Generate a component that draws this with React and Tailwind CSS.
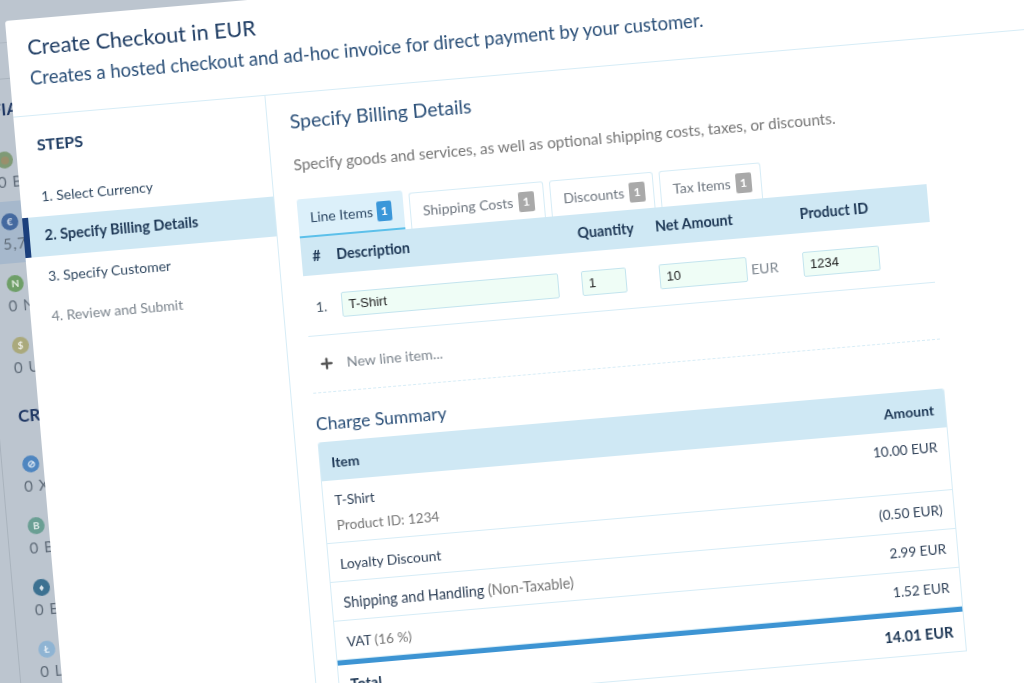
import { Plus } from "lucide-react";

const fiat = [
  { glyph: <span className="size-[8px] rounded-full bg-[#9a8f6c]" />, label: "0 BRL", coin: "bg-[#7f9a76]" },
  { glyph: "€", label: "5,700 EUR", coin: "bg-[#44699f]", active: true },
  { glyph: "N", label: "0 NGN", coin: "bg-[#6f9f68]" },
  { glyph: "$", label: "0 USD", coin: "bg-[#aaa97c]" },
];

const crypto = [
  { glyph: "⊘", label: "0 XRP", coin: "bg-[#4f86c0]" },
  { glyph: "B", label: "0 BTC", coin: "bg-[#6a9f94]" },
  { glyph: "♦", label: "0 ETH", coin: "bg-[#3c7191]" },
  { glyph: "Ł", label: "0 LTC", coin: "bg-[#8fb4d3]" },
];

const steps = [
  { text: "1. Select Currency", cls: "pl-[21px] text-[14px] text-[#324a63]" },
  { text: "2. Specify Billing Details", cls: "border-l-[6px] border-[#1b3f7c] bg-[#cfe8f4] pl-[15px] text-[14.5px] font-bold text-[#1c3654]" },
  { text: "3. Specify Customer", cls: "pl-[21px] text-[14px] text-[#324a63]" },
  { text: "4. Review and Submit", cls: "pl-[21px] text-[14px] text-[#7c858e]" },
];

const tabs = [
  { text: "Shipping Costs", w: "w-[135px]" },
  { text: "Discounts", w: "w-[104px]" },
  { text: "Tax Items", w: "w-[102px]" },
];

const charges = [
  { label: "Loyalty Discount", size: "text-[13.9px]", amount: "(0.50 EUR)" },
  { label: "Shipping and Handling", size: "text-[14.4px]", note: " (Non-Taxable)", amount: "2.99 EUR" },
  { label: "VAT", size: "text-[13.6px]", note: " (16 %)", amount: "1.52 EUR" },
];

function Coin({ item }) {
  return (
    <div className={`h-[62px] pl-[20px] pt-[12px] ${item.active ? "bg-[#a6b8cc]" : ""}`}>
      <div className={`flex size-[17px] items-center justify-center rounded-full text-[10px] font-bold text-white/80 ${item.coin}`}>
        {item.glyph}
      </div>
      <div className="mt-[4px] text-[15px] leading-[18px] tracking-[1px] text-[#5f6b78]">{item.label}</div>
    </div>
  );
}

function Field({ value, className }) {
  return (
    <input
      readOnly
      value={value}
      className={`h-[25px] rounded-[2px] border border-[#c3e4ee] bg-[#effdf6] px-[6px] font-['Liberation_Sans',sans-serif] text-[13px] text-[#222] outline-none ${className}`}
    />
  );
}

function Badge({ active }) {
  return (
    <span className={`flex h-[20px] items-center justify-center rounded-[2px] text-[12px] font-bold text-white ${active ? "w-[15px] bg-[#3b97d9]" : "w-[16px] bg-[#a9a9a9]"}`}>
      1
    </span>
  );
}

export default function App() {
  return (
    <div className="relative h-[683px] w-[1024px] overflow-hidden bg-[#bcc5cf] font-['Lato',sans-serif]">
      <div className="absolute left-[5px] top-[21px] h-[0px] w-[0px] origin-top-left rotate-[-4.95deg] blur-[0.4px]">
        {/* dimmed page behind the dialog */}
        <div className="absolute left-[-42px] top-[21px] h-[36px] w-[300px] border-t border-[#aeb8c2]" />
        <div className="absolute left-[-42px] top-[57px] h-[800px] w-[300px] border-l border-t border-[#a9b3bd] bg-[#bcc5cf]">
          <div className="pl-[20px] pt-[20px] text-[17px] font-bold leading-[20px] text-[#1f3763]">FIAT</div>
          <div className="mt-[20px]">
            {fiat.map((item) => (
              <Coin key={item.label} item={item} />
            ))}
          </div>
          <div className="mt-[17px] pl-[20px] pt-[2px] text-[17px] font-bold leading-[20px] text-[#1f3763]">CRYPTO</div>
          <div className="mt-[18px]">
            {crypto.map((item) => (
              <Coin key={item.label} item={item} />
            ))}
          </div>
        </div>

        {/* dialog */}
        <div className="absolute left-0 top-0 h-[900px] w-[1120px] rounded-tl-[3px] bg-white">
          <header className="h-[97px] border-b border-[#d6ecf6] pl-[20px] pt-[12px]">
            <h1 className="text-[21.6px] leading-[32px] text-[#1e3c63]">Create Checkout in EUR</h1>
            <p className="mt-[2px] text-[18.5px] leading-[26px] text-[#2a4f78]">Creates a hosted checkout and ad-hoc invoice for direct payment by your customer.</p>
          </header>

          <div className="flex">
            <aside className="h-[800px] w-[253px] border-r border-[#d6ecf6] pt-[18px]">
              <h2 className="pl-[21px] text-[16px] font-bold leading-[22px] text-[#1e3c63]">STEPS</h2>
              <ul className="mt-[21px]">
                {steps.map((step) => (
                  <li key={step.text} className={`flex h-[40px] items-center pb-[2px] ${step.cls}`}>
                    {step.text}
                  </li>
                ))}
              </ul>
            </aside>

            <main className="w-[651px] pl-[22px] pt-[14px]">
              <h2 className="text-[19.4px] leading-[28px] text-[#2a4f78]">Specify Billing Details</h2>
              <p className="mt-[18px] text-[15.35px] leading-[22px] text-[#767676]">Specify goods and services, as well as optional shipping costs, taxes, or discounts.</p>

              <div className="mt-[24px] flex h-[39px] items-end gap-[6px]">
                <div className="flex h-[39px] w-[106px] items-center gap-[4px] rounded-t-[3px] border-b-2 border-[#5cc0ea] bg-[#dcf0fa] pl-[12px] text-[14px] text-[#2f4a66]">
                  Line Items <Badge active />
                </div>
                {tabs.map((tab) => (
                  <div key={tab.text} className={`flex h-[36px] items-center gap-[5px] rounded-t-[3px] border border-b-0 border-[#d6ecf6] pl-[12px] text-[14px] text-[#6f7780] ${tab.w}`}>
                    {tab.text} <Badge />
                  </div>
                ))}
              </div>

              <div className="flex h-[38px] w-[629px] items-center bg-[#cfe8f4] text-[14.25px] font-bold text-[#1c3654]">
                <span className="w-[35px] pl-[11px]">#</span>
                <span className="w-[242px]">Description</span>
                <span className="w-[78px]">Quantity</span>
                <span className="w-[145px]">Net Amount</span>
                <span>Product ID</span>
              </div>

              <div className="flex h-[61px] w-[629px] items-start border-b border-[#d6ecf6] pt-[19px] text-[14px] text-[#4a5a6a]">
                <span className="w-[36px] pl-[10px] leading-[25px]">1.</span>
                <Field value="T-Shirt" className="w-[218px]" />
                <Field value="1" className="ml-[23px] w-[45px]" />
                <Field value="10" className="ml-[33px] w-[88px]" />
                <span className="ml-[4px] w-[52px] leading-[25px] text-[#7c858e]">EUR</span>
                <Field value="1234" className="w-[77px]" />
              </div>

              <div className="flex h-[57px] w-[629px] items-center border-b border-dashed border-[#d6ecf6] text-[14.25px] text-[#7c858e]">
                <Plus size={16} strokeWidth={3.5} className="ml-[8px] mr-[12px] text-[#555]" />
                New line item...
              </div>

              <h3 className="mt-[18px] text-[17.5px] leading-[26px] text-[#2a4f78]">Charge Summary</h3>

              <div className="mt-[5px] w-[629px] overflow-hidden rounded-t-[3px] border-x border-b border-[#d6ecf6] text-[13.6px] text-[#2f4158]">
                <div className="flex h-[39px] items-start justify-between bg-[#cfe8f4] px-[11px] pt-[10px] text-[14px] font-bold text-[#1c3654]">
                  <span>Item</span>
                  <span>Amount</span>
                </div>
                <div className="flex h-[63px] justify-between border-b border-[#d6ecf6] px-[11px] pt-[8px]">
                  <div className="pt-[2px]">
                    <div className="leading-[20px]">T-Shirt</div>
                    <div className="mt-[5px] leading-[20px] text-[#767676]">Product ID: 1234</div>
                  </div>
                  <span className="leading-[22px]">10.00 EUR</span>
                </div>
                {charges.map((row) => (
                  <div key={row.label} className="flex h-[39px] items-center justify-between border-b border-[#d6ecf6] px-[11px] last:border-b-0">
                    <span className={`pt-[4px] ${row.size}`}>
                      {row.label}
                      <span className="text-[#767676]">{row.note}</span>
                    </span>
                    <span>{row.amount}</span>
                  </div>
                ))}
                <div className="h-[5px] bg-[#3d94d3]" />
                <div className="flex h-[39px] justify-between px-[11px] pt-[9px] text-[14.5px] font-bold text-[#1c3654]">
                  <span>Total</span>
                  <span>14.01 EUR</span>
                </div>
              </div>
            </main>
          </div>
        </div>
      </div>
    </div>
  );
}
